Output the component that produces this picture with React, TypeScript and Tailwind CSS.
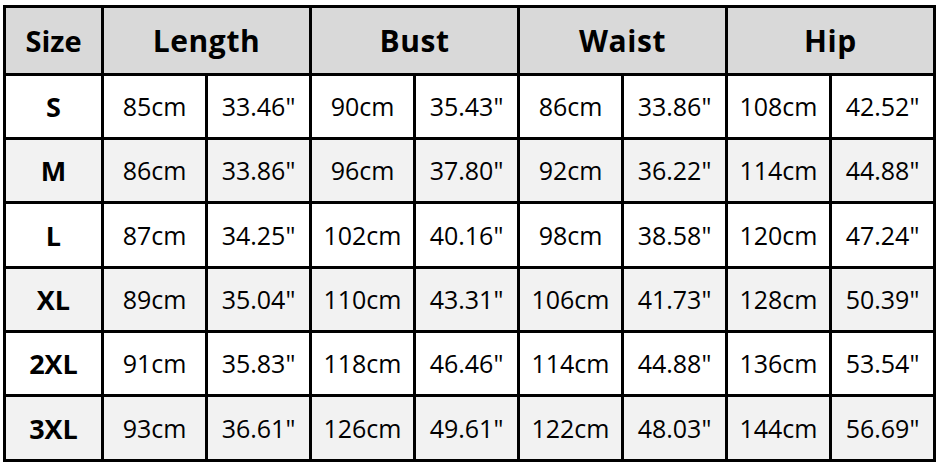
import React from "react";

const rows: [string, string[]][] = [
  ["S", ["85cm", '33.46"', "90cm", '35.43"', "86cm", '33.86"', "108cm", '42.52"']],
  ["M", ["86cm", '33.86"', "96cm", '37.80"', "92cm", '36.22"', "114cm", '44.88"']],
  ["L", ["87cm", '34.25"', "102cm", '40.16"', "98cm", '38.58"', "120cm", '47.24"']],
  ["XL", ["89cm", '35.04"', "110cm", '43.31"', "106cm", '41.73"', "128cm", '50.39"']],
  ["2XL", ["91cm", '35.83"', "118cm", '46.46"', "114cm", '44.88"', "136cm", '53.54"']],
  ["3XL", ["93cm", '36.61"', "126cm", '49.61"', "122cm", '48.03"', "144cm", '56.69"']],
];

const headers = ["Length", "Bust", "Waist", "Hip"];

export default function App() {
  return (
    <div
      className="w-[939px] h-[465px] bg-white pt-[5px] pl-[3px] overflow-hidden text-black"
      style={{ fontFamily: '"Open Sans", "Noto Sans", sans-serif' }}
    >
      <div className="inline-grid grid-cols-[95px_repeat(8,101px)] grid-rows-[65px_61px_61px_62px_61px_61px_62px] gap-[3px] p-[3px] bg-black">
        <div className="bg-[#d9d9d9] flex items-center justify-center text-[29px] font-bold leading-none">
          Size
        </div>
        {headers.map((h) => (
          <div
            key={h}
            className="col-span-2 bg-[#d9d9d9] flex items-center justify-center text-[30px] font-bold leading-none tracking-[0.6px]"
          >
            {h}
          </div>
        ))}
        {rows.map(([size, vals], i) => {
          const bg = i % 2 === 1 ? "bg-[#f2f2f2]" : "bg-white";
          return (
            <React.Fragment key={size}>
              <div className={`${bg} flex items-center justify-center text-[27px] font-bold leading-none`}>
                {size}
              </div>
              {vals.map((v, j) => (
                <div
                  key={j}
                  className={`${bg} flex items-center justify-center text-[25px] leading-none`}
                >
                  {v}
                </div>
              ))}
            </React.Fragment>
          );
        })}
      </div>
    </div>
  );
}
